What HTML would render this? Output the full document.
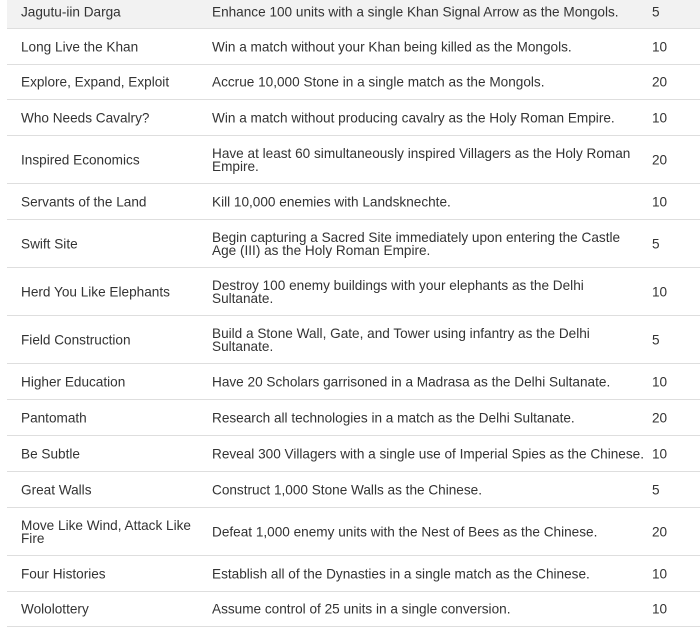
<!DOCTYPE html>
<html><head><style>
body{margin:0;background:#fff;width:700px;height:627px;overflow:hidden;font-family:"Liberation Sans",sans-serif;font-size:13.6px;color:#333}
.r{position:absolute;left:7px;width:693px;border-bottom:1px solid #dedede;box-sizing:border-box}
.c{position:absolute;top:50%;transform:translateY(-50%);line-height:13px}
.a{left:14px;width:185px}.b{left:205px;width:440px}.n{left:645px}
</style></head><body>
<div class="r" style="top:0;height:29px;background:#f2f2f2"><div class="c a" style="margin-top:-2px">Jagutu-iin Darga</div><div class="c b" style="margin-top:-2px">Enhance 100 units with a single Khan Signal Arrow as the Mongols.</div><div class="c n" style="margin-top:-2px">5</div></div>
<div class="r" style="top:29px;height:36px"><div class="c a">Long Live the Khan</div><div class="c b">Win a match without your Khan being killed as the Mongols.</div><div class="c n">10</div></div>
<div class="r" style="top:65px;height:35px"><div class="c a">Explore, Expand, Exploit</div><div class="c b">Accrue 10,000 Stone in a single match as the Mongols.</div><div class="c n">20</div></div>
<div class="r" style="top:100px;height:36px"><div class="c a">Who Needs Cavalry?</div><div class="c b">Win a match without producing cavalry as the Holy Roman Empire.</div><div class="c n">10</div></div>
<div class="r" style="top:136px;height:48px"><div class="c a">Inspired Economics</div><div class="c b">Have at least 60 simultaneously inspired Villagers as the Holy Roman<br>Empire.</div><div class="c n">20</div></div>
<div class="r" style="top:184px;height:36px"><div class="c a">Servants of the Land</div><div class="c b">Kill 10,000 enemies with Landsknechte.</div><div class="c n">10</div></div>
<div class="r" style="top:220px;height:48px"><div class="c a">Swift Site</div><div class="c b">Begin capturing a Sacred Site immediately upon entering the Castle<br>Age (III) as the Holy Roman Empire.</div><div class="c n">5</div></div>
<div class="r" style="top:268px;height:48px"><div class="c a">Herd You Like Elephants</div><div class="c b">Destroy 100 enemy buildings with your elephants as the Delhi<br>Sultanate.</div><div class="c n">10</div></div>
<div class="r" style="top:316px;height:48px"><div class="c a">Field Construction</div><div class="c b">Build a Stone Wall, Gate, and Tower using infantry as the Delhi<br>Sultanate.</div><div class="c n">5</div></div>
<div class="r" style="top:364px;height:36px"><div class="c a">Higher Education</div><div class="c b">Have 20 Scholars garrisoned in a Madrasa as the Delhi Sultanate.</div><div class="c n">10</div></div>
<div class="r" style="top:400px;height:36px"><div class="c a">Pantomath</div><div class="c b">Research all technologies in a match as the Delhi Sultanate.</div><div class="c n">20</div></div>
<div class="r" style="top:436px;height:36px"><div class="c a">Be Subtle</div><div class="c b">Reveal 300 Villagers with a single use of Imperial Spies as the Chinese.</div><div class="c n">10</div></div>
<div class="r" style="top:472px;height:36px"><div class="c a">Great Walls</div><div class="c b">Construct 1,000 Stone Walls as the Chinese.</div><div class="c n">5</div></div>
<div class="r" style="top:508px;height:48px"><div class="c a">Move Like Wind, Attack Like<br>Fire</div><div class="c b">Defeat 1,000 enemy units with the Nest of Bees as the Chinese.</div><div class="c n">20</div></div>
<div class="r" style="top:556px;height:36px"><div class="c a">Four Histories</div><div class="c b">Establish all of the Dynasties in a single match as the Chinese.</div><div class="c n">10</div></div>
<div class="r" style="top:592px;height:35px"><div class="c a">Wololottery</div><div class="c b">Assume control of 25 units in a single conversion.</div><div class="c n">10</div></div>
</body></html>
